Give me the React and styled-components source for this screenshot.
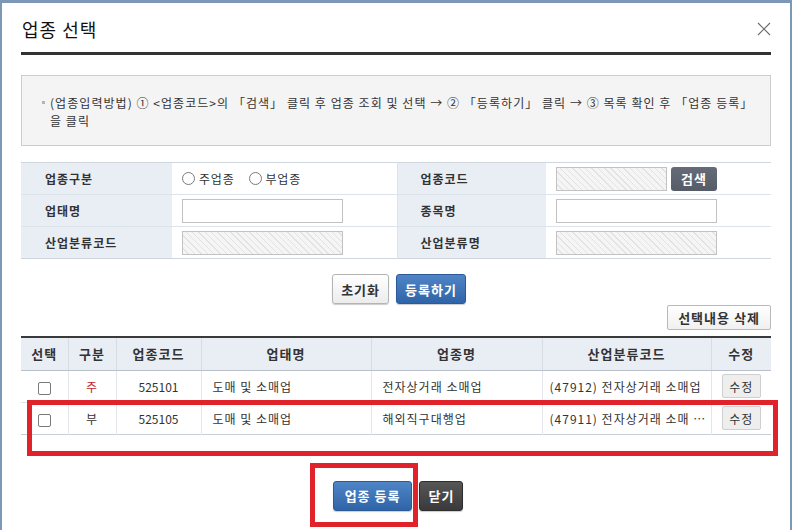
import styled, { createGlobalStyle } from "styled-components";

const Global = createGlobalStyle`
  html, body {
    margin: 0;
    padding: 0;
    background: #ffffff;
  }
  * {
    box-sizing: border-box;
  }
  body {
    font-family: "Noto Sans CJK KR", "Noto Sans", sans-serif;
    color: #333;
  }
`;

export default function App() {
  return (
    <>
      <Global />
      <Window>
        <Header>
          <Title>업종 선택</Title>
          <CloseIcon width="14" height="14" viewBox="0 0 14 14">
            <path d="M1 1 L13 13 M13 1 L1 13" stroke="#6b6b6b" strokeWidth="1.1" fill="none" />
          </CloseIcon>
        </Header>

        <InfoBox>
          <InfoText>
            (업종입력방법) ① &lt;업종코드&gt;의 「검색」 클릭 후 업종 조회 및 선택 → ② 「등록하기」 클릭 → ③ 목록 확인 후 「업종 등록」
            <br />을 클릭
          </InfoText>
        </InfoBox>

        <FormTable>
          <tbody>
            <FormRow>
              <Label>업종구분</Label>
              <Value>
                <RadioGroup>
                  <RadioItem>
                    <Radio />
                    주업종
                  </RadioItem>
                  <RadioItem>
                    <Radio />
                    부업종
                  </RadioItem>
                </RadioGroup>
              </Value>
              <Label $right>업종코드</Label>
              <Value>
                <Inline>
                  <Field $hatched $width={111} />
                  <SearchButton>검색</SearchButton>
                </Inline>
              </Value>
            </FormRow>
            <FormRow>
              <Label>업태명</Label>
              <Value>
                <Field />
              </Value>
              <Label $right>종목명</Label>
              <Value>
                <Field />
              </Value>
            </FormRow>
            <FormRow>
              <Label>산업분류코드</Label>
              <Value>
                <Field $hatched />
              </Value>
              <Label $right>산업분류명</Label>
              <Value>
                <Field $hatched />
              </Value>
            </FormRow>
          </tbody>
        </FormTable>

        <ActionRow>
          <Button>초기화</Button>
          <Button $blue>등록하기</Button>
        </ActionRow>

        <DeleteRow>
          <SmallButton>선택내용 삭제</SmallButton>
        </DeleteRow>

        <ListTable>
          <colgroup>
            <col style={{ width: 47 }} />
            <col style={{ width: 48 }} />
            <col style={{ width: 85 }} />
            <col style={{ width: 170 }} />
            <col style={{ width: 171 }} />
            <col style={{ width: 169 }} />
            <col style={{ width: 60 }} />
          </colgroup>
          <thead>
            <tr>
              <Th>선택</Th>
              <Th>구분</Th>
              <Th>업종코드</Th>
              <Th>업태명</Th>
              <Th>업종명</Th>
              <Th>산업분류코드</Th>
              <Th>수정</Th>
            </tr>
          </thead>
          <tbody>
            {rows.map((r) => (
              <tr key={r.code}>
                <Td $center>
                  <Check />
                </Td>
                <Td $center $red={r.main}>{r.main ? "주" : "부"}</Td>
                <Td $center $num>{r.code}</Td>
                <Td>{r.biz}</Td>
                <Td>{r.item}</Td>
                <Td>{r.cls}</Td>
                <Td $center>
                  <EditButton>수정</EditButton>
                </Td>
              </tr>
            ))}
          </tbody>
        </ListTable>

        <Footer>
          <Button $blue $wide>업종 등록</Button>
          <Button $dark>닫기</Button>
        </Footer>

        <Highlight style={{ left: 25, top: 397, width: 751, height: 56 }} />
        <Highlight style={{ left: 308, top: 460, width: 108, height: 64 }} />
      </Window>
    </>
  );
}

const rows = [
  { main: true, code: "525101", biz: "도매 및 소매업", item: "전자상거래 소매업", cls: "(47912) 전자상거래 소매업" },
  { main: false, code: "525105", biz: "도매 및 소매업", item: "해외직구대행업", cls: "(47911) 전자상거래 소매 …" },
];

const Window = styled.div`
  position: relative;
  width: 792px;
  height: 530px;
  overflow: hidden;
  background: #fff;
  border-top: 3px solid #7d98b6;
  border-left: 2px solid #7d98b6;
  border-right: 2px solid #7d98b6;
  padding: 0 19px;
  display: flex;
  flex-direction: column;
`;

const Header = styled.div`
  height: 52px;
  display: flex;
  align-items: center;
  justify-content: space-between;
  padding-top: 2px;
  border-bottom: 3px solid #333;
`;

const Title = styled.h1`
  margin: 0;
  font-size: 18px;
  font-weight: 400;
  letter-spacing: 1px;
  color: #111;
  padding-left: 1px;
`;

const CloseIcon = styled.svg`
  display: block;
`;

const InfoBox = styled.div`
  margin-top: 20px;
  height: 71px;
  background: #f4f4f4;
  border: 1px solid #cdcdcd;
  padding: 18px 10px 0 28px;
`;

const InfoText = styled.p`
  position: relative;
  margin: 0;
  font-size: 12px;
  line-height: 18px;
  color: #333;
  letter-spacing: 1.05px;
  white-space: nowrap;

  &::before {
    content: "";
    position: absolute;
    left: -8px;
    top: 7px;
    width: 3px;
    height: 3px;
    background: #b5b5b5;
  }
`;

const FormTable = styled.table`
  margin-top: 16px;
  width: 750px;
  border-collapse: collapse;
  table-layout: fixed;
  border-top: 1px solid #cfd6df;
  border-bottom: 1px solid #cfd6df;
`;

const FormRow = styled.tr`
  height: 32px;
  & + & {
    border-top: 1px solid #dde3ea;
  }
`;

const Label = styled.th`
  width: ${(p) => (p.$right ? "149px" : "151px")};
  background: #e9eef5;
  text-align: left;
  padding: 0 0 0 ${(p) => (p.$right ? "23px" : "24px")};
  font-size: 12px;
  font-weight: 700;
  letter-spacing: 1px;
  color: #333;
  border-left: ${(p) => (p.$right ? "1px solid #dde3ea" : "none")};
`;

const Value = styled.td`
  padding: 0 10px;
  vertical-align: middle;
`;

const RadioGroup = styled.div`
  display: flex;
  align-items: center;
  gap: 14px;
`;

const RadioItem = styled.label`
  display: flex;
  align-items: center;
  gap: 4px;
  font-size: 12px;
  letter-spacing: 0.8px;
  color: #333;
`;

const Radio = styled.span`
  display: inline-block;
  width: 13px;
  height: 13px;
  border-radius: 50%;
  border: 1px solid #7a7a7a;
  background: #fff;
`;

const Inline = styled.div`
  display: flex;
  align-items: center;
  gap: 4px;
`;

const Field = styled.div`
  width: ${(p) => p.$width || 161}px;
  height: 24px;
  border: 1px solid #c2c2c2;
  background: ${(p) =>
    p.$hatched
      ? "repeating-linear-gradient(45deg, #f5f5f5 0px, #f5f5f5 3.5px, #e3e3e3 3.5px, #e3e3e3 4.5px)"
      : "#fff"};
`;

const SearchButton = styled.button`
  width: 46px;
  height: 24px;
  border: none;
  border-radius: 3px;
  background: linear-gradient(#656b78, #555b67);
  color: #fff;
  font-family: inherit;
  font-size: 13px;
  font-weight: 700;
  letter-spacing: 1px;
  padding: 0;
`;

const ActionRow = styled.div`
  margin-top: 15px;
  display: flex;
  justify-content: center;
  gap: 7px;
  padding-left: 6px;
`;

const Button = styled.button`
  height: 30px;
  padding: 0 ${(p) => (p.$wide ? 11 : 8)}px;
  border-radius: 3px;
  font-family: inherit;
  font-size: 13px;
  font-weight: 700;
  letter-spacing: 1px;
  cursor: pointer;
  box-shadow: 0 1px 1px rgba(0, 0, 0, 0.2);
  color: ${(p) => (p.$blue || p.$dark ? "#fff" : "#333")};
  border: 1px solid ${(p) => (p.$blue ? "#2b5a96" : p.$dark ? "#2e2e2e" : "#b4b4b4")};
  background: ${(p) =>
    p.$blue
      ? "linear-gradient(#4f85c6, #2f65a8)"
      : p.$dark
      ? "linear-gradient(#565656, #3a3a3a)"
      : "linear-gradient(#ffffff, #ececec)"};
`;

const DeleteRow = styled.div`
  margin-top: 1px;
  display: flex;
  justify-content: flex-end;
`;

const SmallButton = styled.button`
  width: 104px;
  height: 25px;
  padding: 0;
  border: 1px solid #b9b9b9;
  border-radius: 2px;
  background: linear-gradient(#ffffff, #f0f0f0);
  font-family: inherit;
  font-size: 13px;
  font-weight: 700;
  letter-spacing: 1px;
  color: #333;
`;

const ListTable = styled.table`
  margin-top: 6px;
  width: 750px;
  border-collapse: collapse;
  table-layout: fixed;
  border-top: 2px solid #3a3a3a;
  border-bottom: 1px solid #c9ced6;
`;

const Th = styled.th`
  height: 33px;
  background: #e9eef5;
  font-size: 13px;
  font-weight: 700;
  letter-spacing: 1px;
  color: #333;
  border-bottom: 1px solid #b9c0ca;
  border-left: 1px solid #d6dde6;
  &:first-child {
    border-left: none;
  }
`;

const Td = styled.td`
  height: 32px;
  font-size: 12px;
  letter-spacing: ${(p) => (p.$num ? "0" : "1px")};
  color: ${(p) => (p.$red ? "#c0282d" : "#333")};
  text-align: ${(p) => (p.$center ? "center" : "left")};
  padding: 0 ${(p) => (p.$center ? 0 : 4)}px 0 ${(p) => (p.$center ? 0 : 11)}px;
  border-left: 1px solid #e3e7ec;
  border-top: 1px solid #dfe3e8;
  white-space: nowrap;
  overflow: hidden;
  &:first-child {
    border-left: none;
  }
  &:nth-child(6) {
    padding-left: 7px;
  }
`;

const Check = styled.span`
  display: inline-block;
  width: 13px;
  height: 13px;
  border: 1px solid #7a7a7a;
  border-radius: 2px;
  background: #fff;
  vertical-align: middle;
`;

const EditButton = styled.button`
  width: 39px;
  height: 24px;
  padding: 0;
  border: 1px solid #cfcfcf;
  border-radius: 2px;
  background: #eeeeee;
  font-family: inherit;
  font-size: 12px;
  letter-spacing: 1px;
  color: #333;
`;

const Footer = styled.div`
  margin-top: 46px;
  display: flex;
  justify-content: center;
  gap: 7px;
  padding-left: 4px;
`;

const Highlight = styled.div`
  position: absolute;
  border: 5px solid #e0222a;
  pointer-events: none;
`;
